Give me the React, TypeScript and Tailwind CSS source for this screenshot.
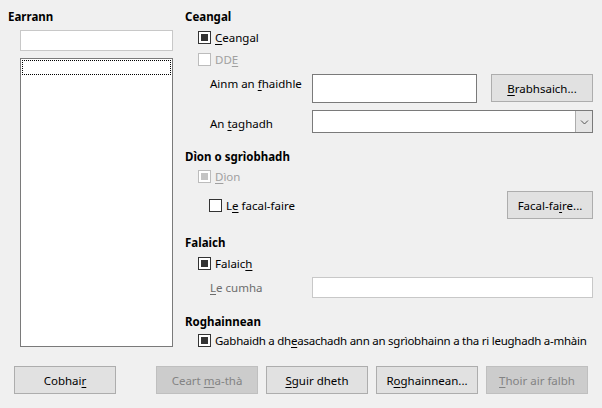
import React from "react";

function Cb({ checked, disabled }: { checked?: boolean; disabled?: boolean }) {
  return (
    <span
      className={
        disabled
          ? "w-[13px] h-[13px] shrink-0 border border-[#bcbcbc] bg-white flex items-center justify-center"
          : "w-[13px] h-[13px] shrink-0 border border-[#333333] bg-white flex items-center justify-center"
      }
    >
      {checked && <span className={disabled ? "w-[7px] h-[7px] bg-[#c4c4c4]" : "w-[7px] h-[7px] bg-[#333333]"} />}
    </span>
  );
}

function Btn({ children, disabled, className = "" }: { children: React.ReactNode; disabled?: boolean; className?: string }) {
  return (
    <div
      className={
        (disabled
          ? "border border-[#bfbfbf] bg-[#cccccc] text-[#838383] "
          : "border border-[#adadad] bg-[#e1e1e1] text-black ") +
        "h-[28px] flex items-center justify-center " +
        className
      }
    >
      {children}
    </div>
  );
}

const U = ({ children }: { children: React.ReactNode }) => (
  <span className="underline underline-offset-2">{children}</span>
);

export default function App() {
  return (
    <div
      className="w-[602px] h-[408px] bg-[#f0f0f0] text-[11.5px] leading-[15px] text-black flex flex-col overflow-hidden"
      style={{ fontFamily: '"Noto Sans", "Liberation Sans", sans-serif' }}
    >
      {/* Top area */}
      <div className="flex h-[358px]">
        {/* Earrann */}
        <div className="w-[185px] pt-[9px]">
          <div className="pl-[8px] font-bold">Earrann</div>
          <div className="ml-[20px] mt-[6px] w-[153px] h-[21px] bg-white border border-[#c8c8c8]" />
          <div className="ml-[20px] mt-[7px] w-[153px] h-[289px] bg-white border border-[#7a7a7a] p-px">
            <div className="h-[15px] border border-dotted border-black" />
          </div>
        </div>

        {/* Right column */}
        <div className="w-[408px] pt-[9px] flex flex-col">
          <div className="font-bold">Ceangal</div>
          <div className="mt-[6px] h-[15px] pl-[13px] flex items-center gap-[4px]">
            <Cb checked />
            <span>
              <U>C</U>eangal
            </span>
          </div>
          <div className="mt-[7px] h-[15px] pl-[13px] flex items-center gap-[4px] text-[#a0a0a0]">
            <Cb disabled />
            <span>
              DD<U>E</U>
            </span>
          </div>
          <div className="mt-[7px] flex">
            <div className="w-[127px] pl-[25px] pt-[2px]">
              Ainm an <U>f</U>haidhle
            </div>
            <div className="w-[165px] h-[29px] bg-white border border-[#7a7a7a]" />
            <Btn className="ml-auto w-[102px]">
              <span>
                <U>B</U>rabhsaich...
              </span>
            </Btn>
          </div>
          <div className="mt-[7px] flex items-center">
            <div className="w-[127px] pl-[25px] pt-[3px]">
              An <U>t</U>aghadh
            </div>
            <div className="flex-1 h-[23px] bg-white border border-[#7a7a7a] flex justify-end">
              <div className="w-[17px] h-full bg-[#e5e5e5] border-l border-[#adadad] flex items-center justify-center">
                <svg width="9" height="6" viewBox="0 0 9 6">
                  <path d="M1 1.5 L4.5 5 L8 1.5" fill="none" stroke="#555" strokeWidth="1" />
                </svg>
              </div>
            </div>
          </div>

          <div className="mt-[16px] font-bold">Dìon o sgrìobhadh</div>
          <div className="mt-[5px] h-[15px] pl-[13px] flex items-center gap-[4px] text-[#a0a0a0]">
            <Cb checked disabled />
            <span>
              <U>D</U>ìon
            </span>
          </div>
          <div className="mt-[7px] h-[28px] pl-[24px] flex items-center gap-[4px]">
            <Cb />
            <span>
              L<U>e</U> facal-faire
            </span>
            <Btn className="ml-auto w-[86px]">
              <span>
                Facal-fa<U>i</U>re...
              </span>
            </Btn>
          </div>

          <div className="mt-[16px] font-bold">Falaich</div>
          <div className="mt-[6px] h-[15px] pl-[13px] flex items-center gap-[4px]">
            <Cb checked />
            <span>
              Falaic<U>h</U>
            </span>
          </div>
          <div className="mt-[6px] flex items-center">
            <div className="w-[127px] pl-[25px] text-[#6d6d6d]">
              <U>L</U>e cumha
            </div>
            <div className="flex-1 h-[21px] bg-white border border-[#c8c8c8]" />
          </div>

          <div className="mt-[16px] font-bold">Roghainnean</div>
          <div className="mt-[4px] h-[15px] pl-[13px] flex items-center gap-[4px]">
            <Cb checked />
            <span className="whitespace-nowrap tracking-[-0.25px]">
              Gabhaidh a dh<U>e</U>asachadh ann an sgrìobhainn a tha ri leughadh a-mhàin
            </span>
          </div>
        </div>
      </div>

      {/* Bottom buttons */}
      <div className="pt-[8px] pl-[14px] flex">
        <Btn className="w-[102px]">
          <span>
            Cobhai<U>r</U>
          </span>
        </Btn>
        <div className="ml-[40px] flex gap-[8px]">
          <Btn disabled className="w-[102px]">
            <span>
              Ceart <U>m</U>a-thà
            </span>
          </Btn>
          <Btn className="w-[102px]">
            <span>
              <U>S</U>guir dheth
            </span>
          </Btn>
          <Btn className="w-[102px]">
            <span>
              R<U>o</U>ghainnean...
            </span>
          </Btn>
          <Btn disabled className="w-[102px]">
            <span>
              <U>T</U>hoir air falbh
            </span>
          </Btn>
        </div>
      </div>
    </div>
  );
}
